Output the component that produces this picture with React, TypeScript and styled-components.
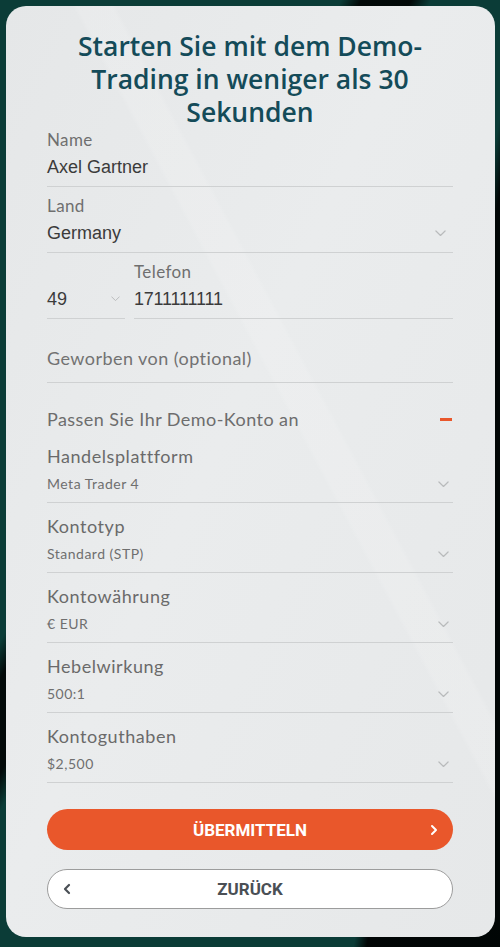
import React from "react";
import styled, { createGlobalStyle } from "styled-components";

const Global = createGlobalStyle`
  html, body { margin: 0; padding: 0; }
  body {
    width: 500px;
    height: 947px;
    overflow: hidden;
    background:
      linear-gradient(118deg, transparent 0 34%, rgba(0,0,0,0.85) 36% 41%, transparent 43%),
      linear-gradient(100deg, transparent 0 78%, rgba(0,0,0,0.9) 80%),
      #0b3c37;
    font-family: "Lato", "Liberation Sans", sans-serif;
  }
`;

const Card = styled.main`
  box-sizing: border-box;
  margin: 6px 5px 0 6px;
  height: 931px;
  border-radius: 20px;
  padding: 24px 42px 0 41px;
  background:
    linear-gradient(62deg, transparent 0 57%, rgba(255,255,255,0.12) 57.5% 61%, transparent 61.5%),
    linear-gradient(115deg, #e5e7e8 0%, #eaeced 45%, #e6e8e9 100%);
  display: flex;
  flex-direction: column;
`;

const Title = styled.h1`
  margin: 0;
  text-align: center;
  font-family: "Open Sans", sans-serif;
  font-weight: 600;
  font-size: 26.5px;
  line-height: 33px;
  color: #144b59;
`;

const Form = styled.div`
  display: flex;
  flex-direction: column;
  margin-top: -8px;
`;

const Field = styled.div<{ $placeholder?: boolean }>`
  display: flex;
  flex-direction: column;
  min-width: 0;
  padding: ${(p) => (p.$placeholder ? "28px 0 13px" : "9px 0 8px")};
  border-bottom: 1px solid #cfd1d2;
`;

const Label = styled.span`
  font-family: "Lato", sans-serif;
  font-size: 17px;
  line-height: 20px;
  letter-spacing: 0.4px;
  color: #6f6f6f;
  margin-bottom: 6px;
`;

const Placeholder = styled.span`
  font-family: "Lato", sans-serif;
  font-size: 18px;
  line-height: 22px;
  letter-spacing: 0.45px;
  color: #727272;
`;

const ValueRow = styled.div`
  display: flex;
  align-items: center;
  justify-content: space-between;
`;

const Value = styled.span<{ $tight?: boolean }>`
  font-family: "Liberation Sans", Arial, sans-serif;
  font-size: 18px;
  line-height: 22px;
  color: #3b3b3b;
  letter-spacing: ${(p) => (p.$tight ? "-0.2px" : "0")};
`;

const PhoneRow = styled.div`
  display: grid;
  grid-template-columns: 78px 1fr;
  column-gap: 9px;
  align-items: end;
`;

const Section = styled.div`
  display: flex;
  align-items: center;
  justify-content: space-between;
  padding: 25px 0 3px;
`;

const SectionTitle = styled.span`
  font-family: "Lato", sans-serif;
  font-size: 18px;
  line-height: 22px;
  letter-spacing: 0.45px;
  color: #6d6d6d;
`;

const Minus = styled.span`
  width: 12px;
  height: 3px;
  background: #e9572b;
  margin-right: 1px;
`;

const SelectField = styled.div`
  display: flex;
  flex-direction: column;
  padding: 12px 0 9px;
  border-bottom: 1px solid #cfd1d2;
`;

const SelectLabel = styled.span`
  font-family: "Lato", sans-serif;
  font-size: 18px;
  line-height: 22px;
  letter-spacing: 0.55px;
  color: #6a6a6a;
  margin-bottom: 8px;
`;

const SelectValue = styled.span`
  font-family: "Lato", sans-serif;
  font-size: 14px;
  line-height: 18px;
  letter-spacing: 0.5px;
  color: #6f6f6f;
`;

const Chevron = styled.svg<{ $mr?: number }>`
  flex: none;
  margin-right: ${(p) => p.$mr ?? 4}px;
`;

const Buttons = styled.div`
  display: flex;
  flex-direction: column;
  gap: 19px;
  margin-top: 26px;
`;

const Button = styled.button<{ $primary?: boolean }>`
  position: relative;
  box-sizing: border-box;
  height: ${(p) => (p.$primary ? 41 : 40)}px;
  width: 100%;
  border-radius: 21px;
  border: ${(p) => (p.$primary ? "none" : "1px solid #9c9c9c")};
  background: ${(p) => (p.$primary ? "#e9572b" : "#ffffff")};
  color: ${(p) => (p.$primary ? "#ffffff" : "#4a4f55")};
  font-family: "Roboto", sans-serif;
  font-weight: 700;
  font-size: 17px;
  display: flex;
  align-items: center;
  justify-content: center;
  padding: 0;
`;

const BtnIcon = styled.svg<{ $side: "left" | "right" }>`
  position: absolute;
  top: 50%;
  transform: translateY(-50%);
  ${(p) => (p.$side === "left" ? "left: 15px;" : "right: 15px;")}
`;

const Down = ({ w = 11, mr = 4, color = "#b9bbbc" }: { w?: number; mr?: number; color?: string }) => (
  <Chevron $mr={mr} width={w} height={w / 2 + 1} viewBox="0 0 12 7">
    <path d="M1 1 L6 6 L11 1" fill="none" stroke={color} strokeWidth="1.3" strokeLinecap="round" strokeLinejoin="round" />
  </Chevron>
);

const selects = [
  ["Handelsplattform", "Meta Trader 4"],
  ["Kontotyp", "Standard (STP)"],
  ["Kontowährung", "€ EUR"],
  ["Hebelwirkung", "500:1"],
  ["Kontoguthaben", "$2,500"],
];

export default function App() {
  return (
    <>
      <Global />
      <Card>
        <Title>
          Starten Sie mit dem Demo-
          <br />
          Trading in weniger als 30
          <br />
          Sekunden
        </Title>
        <Form>
          <Field>
            <Label>Name</Label>
            <Value>Axel Gartner</Value>
          </Field>
          <Field>
            <Label>Land</Label>
            <ValueRow>
              <Value>Germany</Value>
              <Down mr={7} />
            </ValueRow>
          </Field>
          <PhoneRow>
            <Field>
              <ValueRow>
                <Value>49</Value>
                <Down w={9} mr={5} />
              </ValueRow>
            </Field>
            <Field>
              <Label>Telefon</Label>
              <Value $tight>1711111111</Value>
            </Field>
          </PhoneRow>
          <Field $placeholder>
            <Placeholder>Geworben von (optional)</Placeholder>
          </Field>
          <Section>
            <SectionTitle>Passen Sie Ihr Demo-Konto an</SectionTitle>
            <Minus />
          </Section>
          {selects.map(([l, v]) => (
            <SelectField key={l}>
              <SelectLabel>{l}</SelectLabel>
              <ValueRow>
                <SelectValue>{v}</SelectValue>
                <Down mr={4} />
              </ValueRow>
            </SelectField>
          ))}
        </Form>
        <Buttons>
          <Button $primary>
            ÜBERMITTELN
            <BtnIcon $side="right" width="8" height="12" viewBox="0 0 8 12">
              <path d="M2 2 L6 6 L2 10" fill="none" stroke="#fff" strokeWidth="2" strokeLinecap="round" strokeLinejoin="round" />
            </BtnIcon>
          </Button>
          <Button>
            ZURÜCK
            <BtnIcon $side="left" width="8" height="12" viewBox="0 0 8 12">
              <path d="M6 2 L2 6 L6 10" fill="none" stroke="#4a4f55" strokeWidth="2.2" strokeLinecap="round" strokeLinejoin="round" />
            </BtnIcon>
          </Button>
        </Buttons>
      </Card>
    </>
  );
}
